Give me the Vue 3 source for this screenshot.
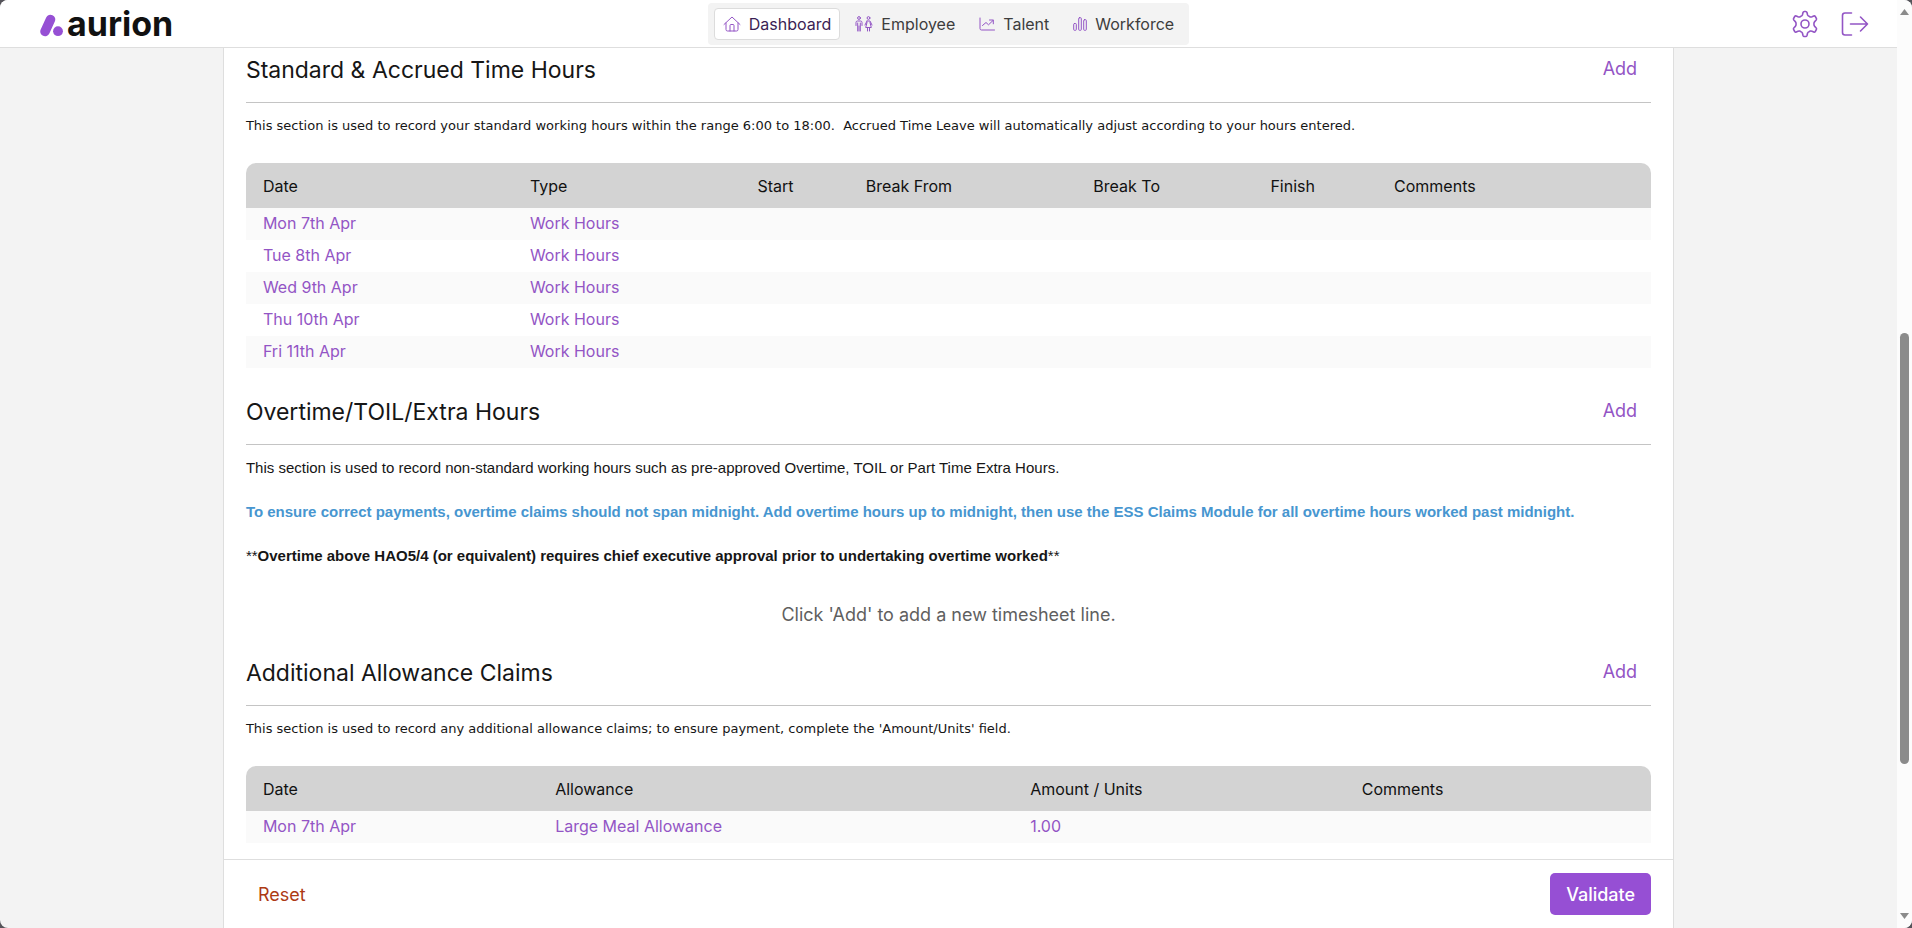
<script setup>
const tabs = [
  { label: 'Dashboard', icon: 'home', active: true },
  { label: 'Employee', icon: 'people' },
  { label: 'Talent', icon: 'trend' },
  { label: 'Workforce', icon: 'bars' }
]
const hourColumns = ['Date', 'Type', 'Start', 'Break From', 'Break To', 'Finish', 'Comments']
const hourRows = ['Mon 7th Apr', 'Tue 8th Apr', 'Wed 9th Apr', 'Thu 10th Apr', 'Fri 11th Apr']
const claimColumns = ['Date', 'Allowance', 'Amount / Units', 'Comments']
</script>

<template>
  <div class="window">
    <div class="page">
      <header class="topbar">
        <a class="logo" href="#" aria-label="aurion home">
          <svg width="24" height="23" viewBox="0 0 24 23" aria-hidden="true">
            <path d="M5 17.5 L10.500 5.500" stroke="#9650d4" stroke-width="9.500" stroke-linecap="round" />
            <circle cx="18" cy="17.200" r="4.900" fill="#9650d4" />
          </svg>
          <span class="wordmark">aurion</span>
        </a>
        <nav class="tabs">
          <a v-for="tab in tabs" :key="tab.label" href="#" class="tab" :class="{ active: tab.active }">
            <svg v-if="tab.icon === 'home'" width="18" height="16" viewBox="0 0 18 16" class="icon">
              <path d="M1 8.500 L9 1 L17 8.500 M3 7 V13.500 Q3 15 4.500 15 H13.500 Q15 15 15 13.500 V7 M7 15 V9.500 Q7 8.500 8 8.500 H10 Q11 8.500 11 9.500 V15" />
            </svg>
            <svg v-else-if="tab.icon === 'people'" width="18" height="16" viewBox="0 0 18 16" class="icon">
              <circle cx="4" cy="2" r="1.400" />
              <circle cx="13.500" cy="2" r="1.400" />
              <path d="M1 9.500 V6.500 Q1 5 2.500 5 H5.500 Q7 5 7 6.500 V9.500 M2.700 7 V15 M5.300 7 V15 M4 10 V15 M12 5 H15 L17 9 M12 5 L10 9 M12 6.500 L10.700 11.500 H16.300 L15 6.500 M12.500 11.500 V15 M14.500 11.500 V15" />
            </svg>
            <svg v-else-if="tab.icon === 'trend'" width="16" height="14" viewBox="0 0 16 14" class="icon">
              <path d="M1 1 V11.500 Q1 13 2.500 13 H15.500 M3.500 8.500 L7 5.500 L9.500 7.800 L14 3.500 M10.500 3 H14.300 V6.800" />
            </svg>
            <svg v-else width="14" height="14" viewBox="0 0 14 14" class="icon">
              <rect x=".7" y="6.500" width="2.600" height="6.800" rx=".8" />
              <rect x="5.700" y=".7" width="2.600" height="12.600" rx=".8" />
              <rect x="10.700" y="2.700" width="2.600" height="10.600" rx=".8" />
            </svg>
            <span>{{ tab.label }}</span>
          </a>
        </nav>
        <div class="actions">
          <button type="button" class="icon-button" aria-label="Settings">
            <svg width="26" height="28" viewBox="0 0 26 28" class="icon bold">
              <path d="M11 2.500 Q11.300 1.500 12.300 1.500 H13.700 Q14.700 1.500 15 2.500 L15.600 5 Q16 6 17 6.300 L18.300 6.900 Q19 7.200 20 6.800 L21.800 6 Q22.700 5.600 23.300 6.500 L24.300 8.300 Q24.900 9.200 24.200 10 L22.700 11.600 Q21.900 12.500 21.900 14 Q21.900 15.500 22.700 16.400 L24.200 18 Q24.900 18.800 24.300 19.700 L23.300 21.500 Q22.700 22.400 21.800 22 L20 21.200 Q19 20.800 18.300 21.100 L17 21.700 Q16 22 15.600 23 L15 25.500 Q14.700 26.500 13.700 26.500 H12.300 Q11.300 26.500 11 25.500 L10.400 23 Q10 22 9 21.700 L7.700 21.100 Q7 20.800 6 21.200 L4.200 22 Q3.300 22.400 2.700 21.500 L1.700 19.700 Q1.100 18.800 1.800 18 L3.300 16.400 Q4.100 15.500 4.100 14 Q4.100 12.500 3.300 11.600 L1.800 10 Q1.100 9.200 1.700 8.300 L2.700 6.500 Q3.300 5.600 4.200 6 L6 6.800 Q7 7.200 7.700 6.900 L9 6.300 Q10 6 10.400 5 Z" />
              <circle cx="13" cy="14" r="4" />
            </svg>
          </button>
          <button type="button" class="icon-button" aria-label="Log out">
            <svg width="28" height="24" viewBox="0 0 28 24" class="icon bold">
              <path d="M10.500 1 H4 Q1.500 1 1.500 3.500 V20.500 Q1.500 23 4 23 H10.500 M9.500 12 H26.500 M19.500 5 L26.500 12 L19.500 19" />
            </svg>
          </button>
        </div>
      </header>

      <main class="panel">
        <div class="content">
          <section>
            <div class="head">
              <h2>Standard &amp; Accrued Time Hours</h2>
              <button type="button" class="add">Add</button>
            </div>
            <p class="note small">This section is used to record your standard working hours within the range 6:00 to 18:00.&nbsp; Accrued Time Leave will automatically adjust according to your hours entered.</p>
            <table class="hours">
              <thead>
                <tr><th v-for="c in hourColumns" :key="c" scope="col">{{ c }}</th></tr>
              </thead>
              <tbody>
                <tr v-for="d in hourRows" :key="d">
                  <td><a href="#">{{ d }}</a></td>
                  <td><a href="#">Work Hours</a></td>
                  <td></td><td></td><td></td><td></td><td></td>
                </tr>
              </tbody>
            </table>
          </section>

          <section>
            <div class="head">
              <h2>Overtime/TOIL/Extra Hours</h2>
              <button type="button" class="add">Add</button>
            </div>
            <div class="notices">
              <p>This section is used to record non-standard working hours such as pre-approved Overtime, TOIL or Part Time Extra Hours.</p>
              <p class="info">To ensure correct payments, overtime claims should not span midnight. Add overtime hours up to midnight, then use the ESS Claims Module for all overtime hours worked past midnight.</p>
              <p>**<strong>Overtime above HAO5/4 (or equivalent) requires chief executive approval prior to undertaking overtime worked</strong>**</p>
            </div>
            <p class="empty">Click 'Add' to add a new timesheet line.</p>
          </section>

          <section>
            <div class="head">
              <h2>Additional Allowance Claims</h2>
              <button type="button" class="add">Add</button>
            </div>
            <p class="note small">This section is used to record any additional allowance claims; to ensure payment, complete the 'Amount/Units' field.</p>
            <table class="claims">
              <thead>
                <tr><th v-for="c in claimColumns" :key="c" scope="col">{{ c }}</th></tr>
              </thead>
              <tbody>
                <tr>
                  <td><a href="#">Mon 7th Apr</a></td>
                  <td><a href="#">Large Meal Allowance</a></td>
                  <td><a href="#">1.00</a></td>
                  <td></td>
                </tr>
              </tbody>
            </table>
          </section>
        </div>
        <footer class="footer">
          <button type="button" class="reset">Reset</button>
          <button type="button" class="validate">Validate</button>
        </footer>
      </main>
    </div>

    <div class="scrollbar" aria-hidden="true">
      <svg width="9" height="6" viewBox="0 0 9 6"><path d="M4.500 0 L9 6 H0 Z" fill="#8b8b8b" /></svg>
      <div class="track"><div class="thumb"></div></div>
      <svg width="9" height="6" viewBox="0 0 9 6"><path d="M0 0 H9 L4.500 6 Z" fill="#8b8b8b" /></svg>
    </div>
  </div>
</template>

<style>
body {
  margin: 0;
  background: #55545a;
}
</style>

<style scoped>
.window {
  display: grid;
  grid-template-columns: minmax(0, 1fr) 15px;
  height: 100vh;
  border-radius: 8px;
  overflow: hidden;
  background: #f3f3f3;
  color: #161616;
  font-family: Inter, sans-serif;
}
.window * {
  box-sizing: border-box;
}
.page {
  display: flex;
  flex-direction: column;
  min-height: 0;
}
.topbar {
  display: grid;
  grid-template-columns: 1fr auto 1fr;
  align-items: center;
  flex: none;
  height: 48px;
  padding: 0 28px;
  background: #fff;
  border-bottom: 1px solid #dedede;
}
a {
  color: inherit;
  text-decoration: none;
}
button {
  padding: 0;
  border: 0;
  background: none;
  font: inherit;
  color: inherit;
  cursor: pointer;
}
.logo {
  display: flex;
  align-items: center;
  gap: 3px;
  padding-left: 12px;
  color: #111;
}
.logo svg {
  margin-top: 4px;
  fill: none;
}
.wordmark {
  font-size: 34px;
  font-weight: 700;
  line-height: 44px;
}
.tabs {
  display: flex;
  align-items: center;
  gap: 6px;
  height: 42px;
  padding: 0 6px;
  border-radius: 4px;
  background: #f3f3f3;
}
.tab {
  display: flex;
  align-items: center;
  gap: 8px;
  height: 32px;
  padding: 0 8px;
  border: 1px solid transparent;
  border-radius: 4px;
  font-size: 16px;
  color: #3d3d3d;
}
.tab.active {
  background: #fff;
  border-color: #dcdcdc;
  color: #3b1e54;
}
.icon {
  fill: none;
  stroke: #9355c5;
  stroke-width: 1;
  stroke-linecap: round;
  stroke-linejoin: round;
}
.icon.bold {
  stroke-width: 1.6;
}
.actions {
  display: flex;
  justify-content: flex-end;
  gap: 23px;
}
.icon-button {
  display: flex;
  align-items: center;
}
.panel {
  display: flex;
  flex: 1;
  flex-direction: column;
  align-self: center;
  width: 76.5%;
  min-height: 0;
  background: #fff;
  border: solid #dedede;
  border-width: 0 1px;
}
.content {
  display: flex;
  flex: 1;
  flex-direction: column;
  gap: 27px;
  min-height: 0;
  padding: 5px 22px 0;
  overflow: hidden;
}
.head {
  display: flex;
  justify-content: space-between;
  align-items: flex-start;
  height: 50px;
  padding-right: 14px;
  border-bottom: 1px solid #c4c4c4;
}
h2 {
  margin: 0;
  font-size: 23px;
  font-weight: 400;
  line-height: 34px;
}
.add {
  font-size: 18px;
  line-height: 32px;
  color: #9355c5;
}
p {
  margin: 0;
  line-height: 20px;
}
.note {
  margin: 13px 0 27px;
}
.small {
  font-family: "DejaVu Sans", sans-serif;
  font-size: 13px;
}
.notices {
  display: grid;
  gap: 24px;
  padding: 13px 0 35px;
  font-family: "Liberation Sans", sans-serif;
  font-size: 15px;
}
.info {
  font-weight: 700;
  color: #4796d0;
}
.empty {
  font-size: 18px;
  line-height: 28px;
  text-align: center;
  color: #5f5f5f;
}
table {
  width: 100%;
  table-layout: fixed;
  border-collapse: collapse;
  font-size: 16px;
}
th,
td {
  padding: 0 0 0 17px;
  text-align: left;
  white-space: nowrap;
}
th {
  height: 45px;
  font-weight: 400;
  color: #111;
  background: #d3d3d3;
}
th:first-child {
  border-top-left-radius: 10px;
}
th:last-child {
  border-top-right-radius: 10px;
}
td {
  height: 32px;
  padding-bottom: 2px;
  color: #9355c5;
}
tbody tr:nth-child(odd) {
  background: #fafafa;
}
.hours th:nth-child(1) { width: 19%; }
.hours th:nth-child(2) { width: 16.2%; }
.hours th:nth-child(3) { width: 7.7%; }
.hours th:nth-child(4) { width: 16.2%; }
.hours th:nth-child(5) { width: 12.6%; }
.hours th:nth-child(6) { width: 8.8%; }
.claims th:nth-child(1) { width: 20.8%; }
.claims th:nth-child(2) { width: 33.8%; }
.claims th:nth-child(3) { width: 23.6%; }
.footer {
  display: flex;
  flex: none;
  justify-content: space-between;
  align-items: center;
  height: 69px;
  padding: 0 22px 0 34px;
  border-top: 1px solid #dedede;
  font-size: 18px;
}
.reset {
  color: #ad3a14;
}
.validate {
  height: 42px;
  padding: 0 16px;
  border-radius: 5px;
  background: #964fd4;
  color: #fff;
  font-weight: 500;
}
.scrollbar {
  display: flex;
  flex-direction: column;
  align-items: center;
  padding: 9px 0;
  background: #fcfcfc;
}
.track {
  display: grid;
  grid-template-rows: 318fr 431fr 149fr;
  flex: 1;
}
.thumb {
  grid-row: 2;
  width: 9px;
  border-radius: 5px;
  background: #8b8b8b;
}
</style>
